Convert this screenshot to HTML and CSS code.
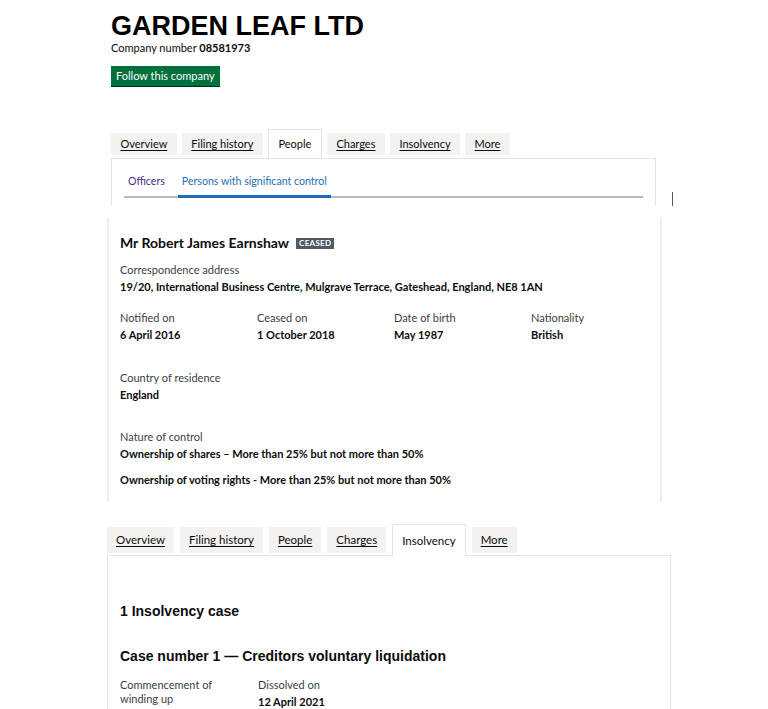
FILE: index.html
```html
<!DOCTYPE html>
<html lang="en">
<head>
<meta charset="utf-8">
<title>GARDEN LEAF LTD</title>
<link rel="stylesheet" href="styles.css">
</head>
<body>
<div class="page">
  <header class="company">
    <h1 class="company-name">GARDEN LEAF LTD</h1>
    <p class="company-number">Company number <strong>08581973</strong></p>
    <a class="button" href="#">Follow this company</a>
  </header>

  <section class="shot shot-people">
    <ul class="tabs">
      <li class="tab"><a href="#">Overview</a></li>
      <li class="tab"><a href="#">Filing history</a></li>
      <li class="tab tab-active"><span>People</span></li>
      <li class="tab"><a href="#">Charges</a></li>
      <li class="tab"><a href="#">Insolvency</a></li>
      <li class="tab"><a href="#">More</a></li>
    </ul>
    <div class="panel panel-people">
      <ul class="subnav">
        <li class="subnav-item"><a class="visited" href="#">Officers</a></li>
        <li class="subnav-item subnav-active"><a href="#">Persons with significant control</a></li>
      </ul>
    </div>
    <span class="cursor-mark"></span>
  </section>

  <section class="shot card">
    <h2 class="person-name">Mr Robert James Earnshaw <span class="badge">Ceased</span></h2>
    <dl class="field">
      <dt>Correspondence address</dt>
      <dd>19/20, International Business Centre, Mulgrave Terrace, Gateshead, England, NE8 1AN</dd>
    </dl>
    <div class="field-row">
      <dl class="field"><dt>Notified on</dt><dd>6 April 2016</dd></dl>
      <dl class="field"><dt>Ceased on</dt><dd>1 October 2018</dd></dl>
      <dl class="field"><dt>Date of birth</dt><dd>May 1987</dd></dl>
      <dl class="field"><dt>Nationality</dt><dd>British</dd></dl>
    </div>
    <dl class="field field-country">
      <dt>Country of residence</dt>
      <dd>England</dd>
    </dl>
    <dl class="field field-control">
      <dt>Nature of control</dt>
      <dd>Ownership of shares – More than 25% but not more than 50%</dd>
      <dd class="control-second">Ownership of voting rights - More than 25% but not more than 50%</dd>
    </dl>
  </section>

  <section class="shot shot-insolvency">
    <ul class="tabs tabs-lg">
      <li class="tab"><a href="#">Overview</a></li>
      <li class="tab"><a href="#">Filing history</a></li>
      <li class="tab"><a href="#">People</a></li>
      <li class="tab"><a href="#">Charges</a></li>
      <li class="tab tab-active"><span>Insolvency</span></li>
      <li class="tab"><a href="#">More</a></li>
    </ul>
    <div class="panel panel-insolvency">
      <h2 class="heading-arial">1 Insolvency case</h2>
      <h3 class="heading-arial case-heading">Case number 1 — Creditors voluntary liquidation</h3>
      <div class="case-row">
        <dl class="case-field"><dt>Commencement of<br>winding up</dt></dl>
        <dl class="case-field"><dt>Dissolved on</dt><dd>12 April 2021</dd></dl>
      </div>
    </div>
  </section>
</div>
</body>
</html>
```

FILE: styles.css
```css
html, body {
  margin: 0;
  padding: 0;
  background: #ffffff;
}

body {
  font-family: Lato, "Noto Sans", sans-serif;
  color: #0b0c0c;
  font-size: 11px;
}

ul, dl, dd, dt, h1, h2, h3, p {
  margin: 0;
  padding: 0;
}

ul { list-style: none; }

a { color: inherit; }

.page {
  width: 768px;
  height: 709px;
  overflow: hidden;
  padding-top: 11px;
  box-sizing: border-box;
}

/* Header */
.company {
  margin-left: 111px;
}

.company-name {
  font-family: "Liberation Sans", Arial, sans-serif;
  font-weight: bold;
  font-size: 27px;
  line-height: 30px;
  color: #000;
}

.company-number {
  font-size: 11px;
  line-height: 14px;
  margin-top: 0;
  color: #0b0c0c;
}

.company-number strong { font-weight: 700; }

.button {
  display: inline-block;
  margin-top: 11px;
  height: 20px;
  line-height: 20px;
  padding: 0 5px;
  background: #00703c;
  color: #fff;
  text-decoration: none;
  font-size: 11px;
  box-shadow: 0 1px 0 #002d18;
}

/* Tabs */
.shot {
  position: relative;
}

.shot-people {
  margin-top: 43px;
  margin-left: 111px;
  width: 545px;
}

.tabs {
  display: flex;
  gap: 5px;
  align-items: flex-start;
  position: relative;
  z-index: 1;
}

.tab {
  margin-top: 4px;
  height: 22px;
  line-height: 22px;
  padding: 0 9.5px;
  background: #f3f2f1;
  color: #0b0c0c;
}

.tab a { color: #0b0c0c; text-decoration: underline; text-underline-offset: 2px; }

.tab-active {
  margin-top: 0;
  height: 28px;
  line-height: 28px;
  background: #fff;
  border: 1px solid #e3e3e3;
  border-bottom: 0;
  margin-bottom: -2px;
}

.panel {
  border: 1px solid #e3e3e3;
  border-bottom: 0;
  background: #fff;
  margin-top: 2px;
}

.panel-people {
  height: 48px;
  padding: 10px 12px 0;
  box-sizing: border-box;
}

.subnav {
  display: flex;
  gap: 9px;
  border-bottom: 2px solid #b9b9b9;
  height: 27px;
}

.subnav-item {
  padding: 0 4px;
  line-height: 24px;
  margin-bottom: -2px;
  font-size: 10.6px;
}

.subnav-item a { text-decoration: none; color: #1d70b8; }
.subnav-item a.visited { color: #4c2c92; }

.subnav-active {
  border-bottom: 3px solid #1d70b8;
}

.cursor-mark {
  position: absolute;
  left: 561px;
  top: 63px;
  width: 1px;
  height: 14px;
  background: #555;
}

/* PSC card */
.card {
  margin-top: 11px;
  margin-left: 107px;
  width: 555px;
  box-sizing: border-box;
  height: 285px;
  border-left: 2px solid #efefef;
  border-right: 2px solid #efefef;
  padding: 17px 11px 0;
}

.person-name {
  font-size: 14px;
  line-height: 18px;
  font-weight: 700;
  display: flex;
  align-items: center;
  gap: 7px;
}

.badge {
  display: inline-block;
  background: #505a5f;
  color: #fff;
  font-size: 8px;
  line-height: 11px;
  padding: 0 3px;
  text-transform: uppercase;
  letter-spacing: 0.3px;
  font-weight: 700;
}

.field dt {
  color: #383f43;
  line-height: 17px;
}

.field dd {
  font-weight: 700;
  line-height: 17px;
}

.card > .field:first-of-type { margin-top: 9px; }

.field-row {
  display: grid;
  grid-template-columns: repeat(4, 137px);
  margin-top: 14px;
}

.field-country { margin-top: 26px; }
.field-control { margin-top: 25px; }
.control-second { margin-top: 9px; }

/* Insolvency */
.shot-insolvency {
  margin-top: 22px;
  margin-left: 107px;
  width: 564px;
}

.tabs-lg { gap: 6px; }

.tabs-lg .tab {
  margin-top: 3px;
  height: 26px;
  line-height: 26px;
  padding: 0 9px;
  font-size: 11.5px;
}

.tabs-lg .tab-active {
  margin-top: 0;
  height: 31px;
  line-height: 31px;
  margin-bottom: -2px;
}

.panel-insolvency {
  margin-top: 1px;
  height: 160px;
  padding: 46px 12px 0;
}

.heading-arial {
  font-family: "Liberation Sans", Arial, sans-serif;
  font-weight: bold;
  font-size: 14px;
  line-height: 18px;
  color: #0b0c0c;
}

.case-heading {
  margin-top: 27px;
}

.case-row {
  display: grid;
  grid-template-columns: 138px 138px;
  margin-top: 13px;
}

.case-field dt {
  color: #383f43;
  line-height: 14px;
}

.case-field dd {
  font-weight: 700;
  line-height: 17px;
  margin-top: 1px;
}
```
